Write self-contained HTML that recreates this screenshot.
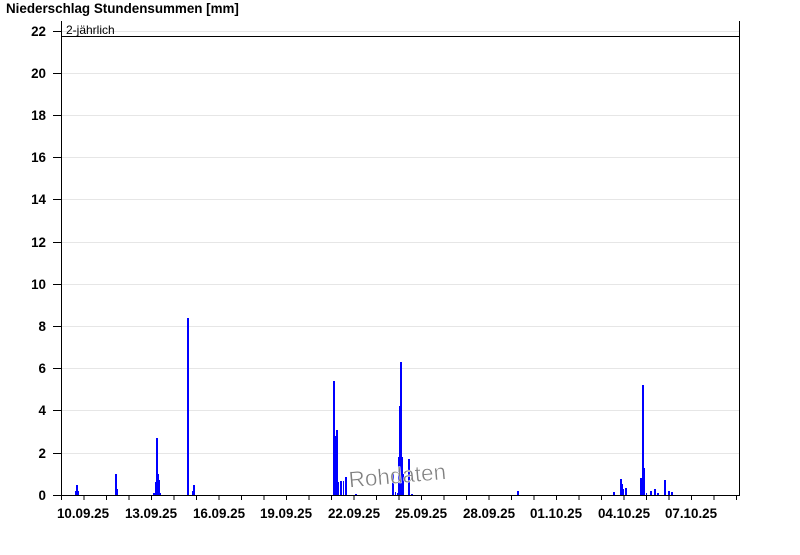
<!DOCTYPE html>
<html><head><style>body{margin:0;background:#fff;width:800px;height:550px;overflow:hidden}</style></head><body>
<svg width="800" height="550" xmlns="http://www.w3.org/2000/svg" font-family="Liberation Sans, Arial, sans-serif">
<text x="6" y="13" font-size="13.4" font-weight="bold">Niederschlag Stundensummen [mm]</text>
<g stroke="#e6e6e6" stroke-width="1">
<line x1="61" x2="740" y1="73.5" y2="73.5"/><line x1="61" x2="740" y1="115.5" y2="115.5"/><line x1="61" x2="740" y1="157.5" y2="157.5"/><line x1="61" x2="740" y1="199.5" y2="199.5"/><line x1="61" x2="740" y1="242.5" y2="242.5"/><line x1="61" x2="740" y1="284.5" y2="284.5"/><line x1="61" x2="740" y1="326.5" y2="326.5"/><line x1="61" x2="740" y1="368.5" y2="368.5"/><line x1="61" x2="740" y1="410.5" y2="410.5"/><line x1="61" x2="740" y1="453.5" y2="453.5"/><line x1="61" x2="740" y1="31.5" y2="31.5"/>
</g>
<g font-size="13.4" font-weight="bold" text-anchor="end">
<text x="46" y="36">22</text><text x="46" y="78">20</text><text x="46" y="120">18</text><text x="46" y="162">16</text><text x="46" y="204">14</text><text x="46" y="247">12</text><text x="46" y="289">10</text><text x="46" y="331">8</text><text x="46" y="373">6</text><text x="46" y="415">4</text><text x="46" y="458">2</text><text x="46" y="500">0</text>
</g>
<g stroke="#000" stroke-width="1">
<line x1="53" x2="61" y1="31.5" y2="31.5"/><line x1="53" x2="61" y1="73.5" y2="73.5"/><line x1="53" x2="61" y1="115.5" y2="115.5"/><line x1="53" x2="61" y1="157.5" y2="157.5"/><line x1="53" x2="61" y1="199.5" y2="199.5"/><line x1="53" x2="61" y1="242.5" y2="242.5"/><line x1="53" x2="61" y1="284.5" y2="284.5"/><line x1="53" x2="61" y1="326.5" y2="326.5"/><line x1="53" x2="61" y1="368.5" y2="368.5"/><line x1="53" x2="61" y1="410.5" y2="410.5"/><line x1="53" x2="61" y1="453.5" y2="453.5"/><line x1="53" x2="61" y1="495.5" y2="495.5"/>
<line x1="61.5" x2="61.5" y1="21" y2="496"/><line x1="739.5" x2="739.5" y1="21" y2="496"/>
<line x1="61" x2="740" y1="495.5" y2="495.5"/>
<line x1="61" x2="740" y1="36.5" y2="36.5"/>
</g>
<g stroke="#000">
<path d="M61.5 495v5M84 495v5M106.5 495v5M129 495v5M151.5 495v5M174 495v5M196.5 495v5M219 495v5M241.5 495v5M264 495v5M286.5 495v5M309 495v5M331.5 495v5M354 495v5M376.5 495v5M399 495v5M421.5 495v5M444 495v5M466.5 495v5M489 495v5M511.5 495v5M534 495v5M556.5 495v5M579 495v5M601.5 495v5M624 495v5M646.5 495v5M669 495v5M691.5 495v5M714 495v5M736.5 495v5"/>
</g>
<text x="66" y="34" font-size="12">2-jährlich</text>
<g font-size="13.4" font-weight="bold" text-anchor="middle">
<text x="83" y="518">10.09.25</text><text x="151" y="518">13.09.25</text><text x="219" y="518">16.09.25</text><text x="286" y="518">19.09.25</text><text x="354" y="518">22.09.25</text><text x="421" y="518">25.09.25</text><text x="489" y="518">28.09.25</text><text x="556" y="518">01.10.25</text><text x="624" y="518">04.10.25</text><text x="691" y="518">07.10.25</text>
</g>
<g fill="#0000ff">
<rect x="75" y="491" width="1" height="4"/><rect x="76" y="485" width="2" height="10"/><rect x="78" y="491" width="1" height="4"/>
<rect x="115" y="474" width="2" height="21"/><rect x="117" y="489" width="1" height="6"/>
<rect x="153" y="493" width="2" height="2"/><rect x="155" y="482" width="1" height="13"/><rect x="156" y="438" width="2" height="57"/><rect x="157" y="474" width="2" height="21"/><rect x="159" y="480" width="1" height="15"/><rect x="160" y="493" width="1" height="2"/>
<rect x="187" y="318" width="2" height="177"/>
<rect x="192" y="491" width="1" height="4"/><rect x="193" y="485" width="2" height="10"/>
<rect x="333" y="381" width="2" height="114"/><rect x="335" y="436" width="1" height="59"/><rect x="336" y="430" width="2" height="65"/><rect x="338" y="482" width="1" height="13"/><rect x="340" y="481" width="2" height="14"/><rect x="343" y="481" width="1" height="14"/><rect x="345" y="477" width="2" height="18"/><rect x="355" y="494" width="2" height="1"/>
<rect x="392" y="474" width="2" height="21"/><rect x="395" y="492" width="1" height="3"/><rect x="397" y="493" width="1" height="2"/><rect x="398" y="457" width="1" height="38"/><rect x="399" y="406" width="1" height="89"/><rect x="400" y="362" width="2" height="133"/><rect x="402" y="457" width="1" height="38"/><rect x="403" y="474" width="1" height="21"/><rect x="408" y="459" width="2" height="36"/><rect x="411" y="494" width="2" height="1"/>
<rect x="517" y="491" width="2" height="4"/>
<rect x="613" y="492" width="2" height="3"/><rect x="620" y="479" width="2" height="16"/><rect x="622" y="484" width="1" height="11"/><rect x="623" y="489" width="1" height="6"/><rect x="625" y="488" width="2" height="7"/><rect x="640" y="478" width="2" height="17"/><rect x="642" y="385" width="2" height="110"/><rect x="644" y="468" width="1" height="27"/><rect x="646" y="493" width="1" height="2"/><rect x="650" y="491" width="2" height="4"/><rect x="654" y="489" width="2" height="6"/><rect x="657" y="493" width="2" height="2"/><rect x="664" y="480" width="2" height="15"/><rect x="668" y="491" width="2" height="4"/><rect x="671" y="492" width="2" height="3"/>
</g>
<text x="348" y="483" font-size="22.5" fill="#808080" stroke="#fff" stroke-width="0.5" transform="rotate(-5 400 470)">Rohdaten</text>
</svg>
</body></html>
